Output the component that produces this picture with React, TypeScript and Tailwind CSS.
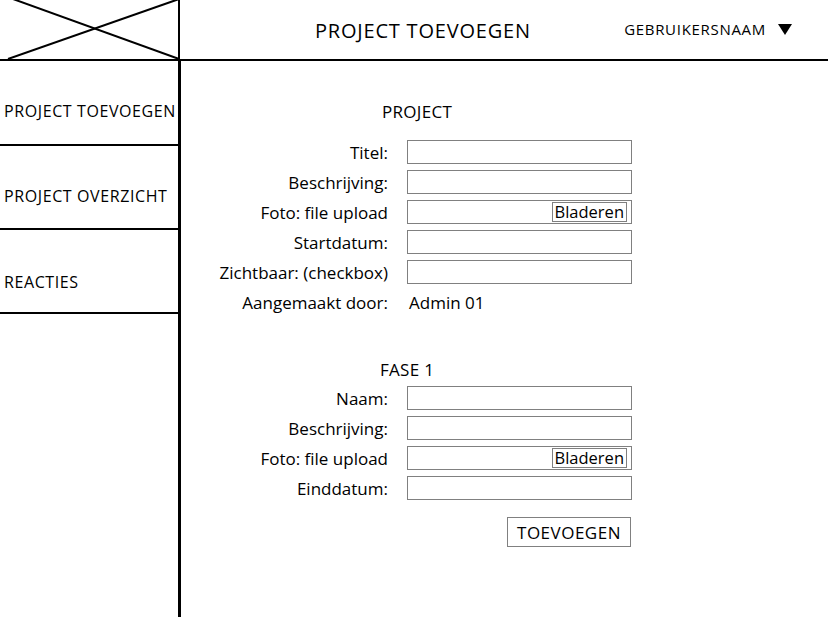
import React from "react";

const font = { fontFamily: '"Open Sans", "Noto Sans", sans-serif' };

function Row({ label, upload }: { label: string; upload?: boolean }) {
  return (
    <div className="flex items-center h-[30px]">
      <div className="w-[207px] text-right text-[17px] text-black leading-none">{label}</div>
      <div className="ml-[19px] w-[225px] h-[24px] border border-[#808080] flex items-center justify-end pr-[4px]">
        {upload && (
          <div className="border border-[#808080] h-[20px] px-[2px] flex items-center text-[16.5px] leading-none">Bladeren</div>
        )}
      </div>
    </div>
  );
}

export default function App() {
  return (
    <div className="w-[828px] h-[617px] bg-white text-black flex flex-col overflow-hidden" style={font}>
      <div className="h-[61px] flex border-b-2 border-black shrink-0">
        <div className="w-[180px] border-r-2 border-black shrink-0">
          <svg width="178" height="59" viewBox="0 0 178 59">
            <line x1="13" y1="-1" x2="179" y2="59" stroke="black" strokeWidth="2" />
            <line x1="8" y1="59" x2="179" y2="-1" stroke="black" strokeWidth="2" />
          </svg>
        </div>
        <div className="flex-1 flex items-center">
          <div className="pl-[135px] pt-[2px] text-[20px] tracking-[0.8px] leading-none">PROJECT TOEVOEGEN</div>
          <div className="ml-auto pr-[36px] flex items-center">
            <span className="text-[15px] tracking-[0.7px] leading-none">GEBRUIKERSNAAM</span>
            <svg className="ml-[12px]" width="14" height="11" viewBox="0 0 14 11">
              <polygon points="0,0 14,0 7,11" fill="black" />
            </svg>
          </div>
        </div>
      </div>
      <div className="flex flex-1">
        <div className="w-[181px] border-r-[3px] border-black shrink-0">
          <div className="h-[85px] border-b-2 border-black pt-[42px] pl-[4px] text-[16px] tracking-[0.6px] leading-none whitespace-nowrap">PROJECT TOEVOEGEN</div>
          <div className="h-[84px] border-b-2 border-black pt-[42px] pl-[4px] text-[16px] tracking-[0.6px] leading-none whitespace-nowrap">PROJECT OVERZICHT</div>
          <div className="h-[84px] border-b-2 border-black pt-[44px] pl-[4px] text-[16px] tracking-[0.6px] leading-none whitespace-nowrap">REACTIES</div>
        </div>
        <div className="flex-1 flex flex-col">
          <div className="pt-[42px] pl-[201px] text-[17px] tracking-[0.3px] leading-none">PROJECT</div>
          <div className="mt-[17px] flex flex-col">
            <Row label="Titel:" />
            <Row label="Beschrijving:" />
            <Row label="Foto: file upload" upload />
            <Row label="Startdatum:" />
            <Row label="Zichtbaar: (checkbox)" />
            <div className="flex items-center h-[30px]">
              <div className="w-[207px] text-right text-[17px] leading-none">Aangemaakt door:</div>
              <div className="ml-[21px] text-[17px] leading-none">Admin 01</div>
            </div>
          </div>
          <div className="mt-[44px] pl-[199px] text-[17px] tracking-[0.3px] leading-none">FASE 1</div>
          <div className="mt-[5px] flex flex-col">
            <Row label="Naam:" />
            <Row label="Beschrijving:" />
            <Row label="Foto: file upload" upload />
            <Row label="Einddatum:" />
          </div>
          <div className="mt-[14px] pl-[326px]">
            <div className="w-[124px] h-[30px] border border-[#808080] flex items-center justify-center text-[17px] tracking-[0.5px] leading-none">TOEVOEGEN</div>
          </div>
        </div>
      </div>
    </div>
  );
}
